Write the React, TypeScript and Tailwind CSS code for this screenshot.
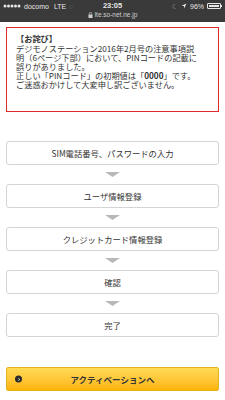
import React from "react";

const STEPS = [
  "SIM電話番号、パスワードの入力",
  "ユーザ情報登録",
  "クレジットカード情報登録",
  "確認",
  "完了",
];

const FONT = { fontFamily: '"Noto Sans CJK JP", "Noto Sans", sans-serif' };

function StatusBar() {
  return (
    <div className="h-[22px] bg-[#3a3a3a] text-[#e6e6e6] flex flex-col" style={{ fontFamily: '"Liberation Sans", sans-serif' }}>
      <div className="relative h-[12px] flex items-center justify-between px-[3px] text-[7px] leading-none">
        <div className="flex items-center gap-[3px]">
          <svg width="18" height="4" viewBox="0 0 18 4">
            {[0, 1, 2, 3, 4].map((i) => (
              <circle key={i} cx={2 + i * 3.5} cy="2" r="1.5" fill="#e6e6e6" />
            ))}
          </svg>
          <span>docomo</span>
          <span className="ml-[2px]">LTE</span>
          <span className="text-[#9a9a9a]">◌</span>
        </div>
        <span className="absolute left-1/2 -translate-x-1/2 font-bold text-[7.5px]">23:05</span>
        <div className="flex items-center gap-[3px]">
          <span className="text-[#9a9a9a] text-[7px]">☾</span>
          <svg width="6" height="6" viewBox="0 0 10 10">
            <path d="M9 1 L1 4.5 L5 5 L5.5 9 Z" fill="#e6e6e6" />
          </svg>
          <span>96%</span>
          <div className="flex items-center">
            <div className="w-[14px] h-[6px] border border-[#e6e6e6] rounded-[1px] p-[1px]">
              <div className="h-full w-[95%] bg-[#e6e6e6]" />
            </div>
            <div className="w-[1px] h-[2px] bg-[#e6e6e6]" />
          </div>
        </div>
      </div>
      <div className="flex items-center justify-center gap-[2px] text-[6.5px] leading-none text-[#d0d0d0]">
        <svg width="5" height="6" viewBox="0 0 5 6">
          <rect x="0.5" y="2.5" width="4" height="3.5" fill="#d0d0d0" />
          <path d="M1.3 2.6 V1.6 A1.2 1.2 0 0 1 3.7 1.6 V2.6" stroke="#d0d0d0" strokeWidth="0.7" fill="none" />
        </svg>
        <span>lte.so-net.ne.jp</span>
      </div>
    </div>
  );
}

export default function App() {
  return (
    <div className="w-[225px] h-[400px] bg-white flex flex-col overflow-hidden" style={FONT}>
      <StatusBar />
      <div className="flex flex-col px-[6px]">
        <div className="mt-[5px] h-[85px] border-[1.5px] border-[#e02a2a] pl-[9px] pt-[6px] text-[#333] text-[8.2px] leading-[9px] whitespace-nowrap">
          <p className="font-bold mb-[1px]">【お詫び】</p>
          <p>
            デジモノステーション2016年2月号の注意事項説
            <br />
            明（6ページ下部）において、PINコードの記載に
            <br />
            誤りがありました。
            <br />
            正しい「PINコード」の初期値は「<span className="font-bold">0000</span>」です。
            <br />
            ご迷惑おかけして大変申し訳ございません。
          </p>
        </div>

        <div className="mt-[29px] flex flex-col items-center">
          {STEPS.map((step, i) => (
            <React.Fragment key={step}>
              {i > 0 && (
                <div className="h-[19px] flex items-center justify-center">
                  <svg width="15" height="5" viewBox="0 0 15 5">
                    <path d="M0 0 H15 L7.5 5 Z" fill="#b8b8b8" />
                  </svg>
                </div>
              )}
              <div className="w-full h-[24px] border border-[#d4d4d4] rounded-[3px] bg-white flex items-center justify-center text-[8.3px] text-[#333]">
                {step}
              </div>
            </React.Fragment>
          ))}
        </div>

        <button className="mt-[30px] w-full h-[24px] relative rounded-[2px] border border-[#e6b422] bg-gradient-to-b from-[#ffdb55] to-[#ffb400] flex items-center justify-center text-[8.5px] font-bold text-[#333]">
          <span className="absolute left-[8px] top-1/2 -translate-y-1/2 w-[7px] h-[7px] rounded-full bg-[#2b2b2b] flex items-center justify-center">
            <svg width="4" height="4" viewBox="0 0 4 4">
              <path d="M1.3 0.7 L2.8 2 L1.3 3.3" stroke="#fff" strokeWidth="0.8" fill="none" />
            </svg>
          </span>
          アクティベーションへ
        </button>
      </div>
    </div>
  );
}
